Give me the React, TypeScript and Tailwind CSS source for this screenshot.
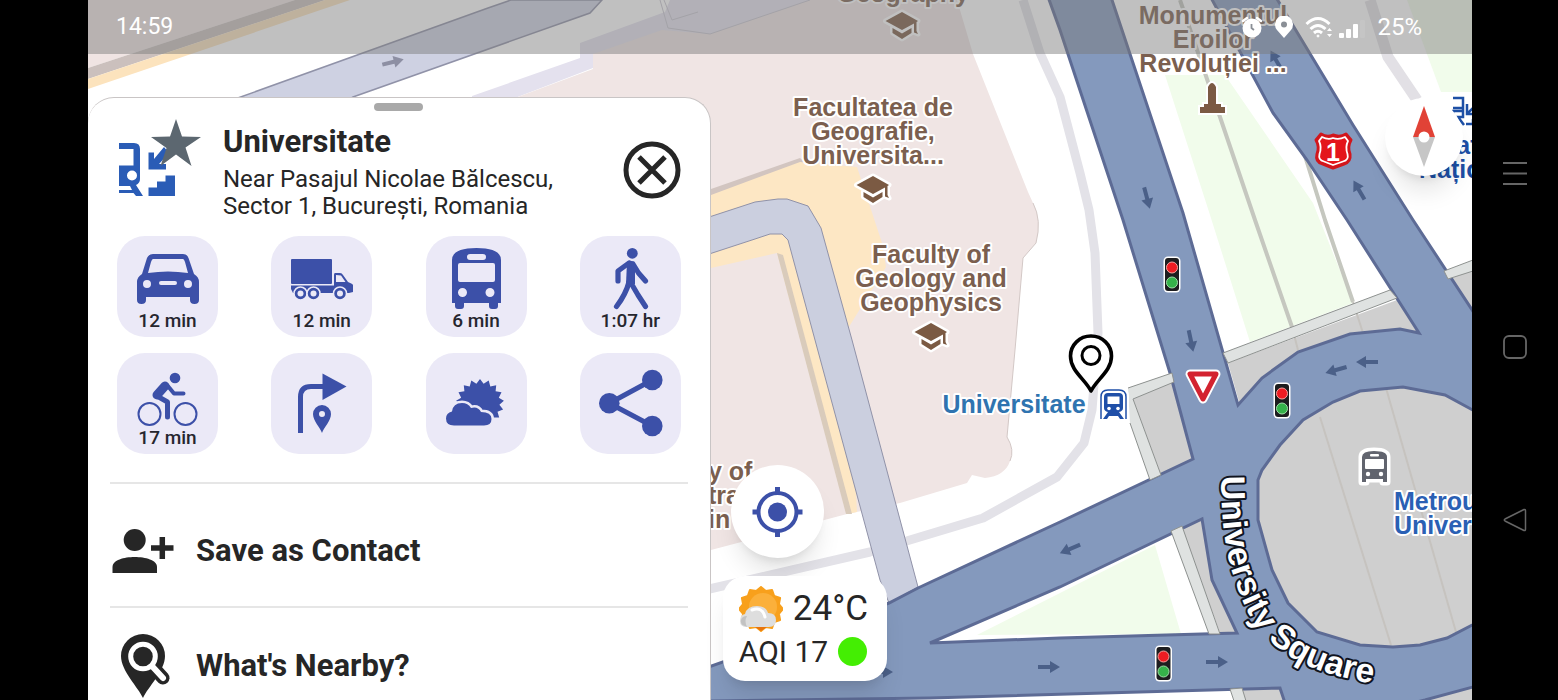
import type { ReactNode } from "react"

const INK = "#262626"

function sunPoints(cx: number, cy: number, outer: number, inner: number, rays: number) {
  return Array.from({ length: rays * 2 }, (_, i) => {
    const r = i % 2 ? inner : outer
    const a = (Math.PI * i) / rays - Math.PI / 2
    return `${(cx + r * Math.cos(a)).toFixed(1)},${(cy + r * Math.sin(a)).toFixed(1)}`
  }).join(" ")
}

/* ---------- map ---------- */

type LabelProps = { x: number; y: number; lines: string[]; className: string; anchor?: "start" | "middle" }

function Label({ x, y, lines, className, anchor = "middle" }: LabelProps) {
  return (
    <text textAnchor={anchor} strokeWidth={4} strokeLinejoin="round" className={`stroke-white text-[25px] font-bold [paint-order:stroke] ${className}`}>
      {lines.map((line, i) => (
        <tspan key={line} x={x} y={y + i * 24}>{line}</tspan>
      ))}
    </text>
  )
}

function Arrow({ x, y, angle, color = "#4b6088" }: { x: number; y: number; angle: number; color?: string }) {
  return (
    <path
      d="M-11 -2H1V-6L11 0L1 6V2H-11Z"
      fill={color}
      transform={`translate(${x} ${y}) rotate(${angle})`}
    />
  )
}

function TrafficLight({ x, y }: { x: number; y: number }) {
  return (
    <g transform={`translate(${x} ${y})`}>
      <rect x="-8.500" y="-18.500" width="17" height="36" rx="4.500" fill="#fff" />
      <rect x="-7" y="-17" width="14" height="33" rx="3" fill="#1d1d1f" />
      <circle cy="-7.500" r="5.500" fill="#ee1c22" stroke="#f3a3a0" />
      <circle cy="7.500" r="5.500" fill="#35b24a" stroke="#9fdca8" />
    </g>
  )
}

function Cap({ x, y }: { x: number; y: number }) {
  const d = "M-16.500 -5L0 -14L16 -5L14.500 -4V5L16 8L12 6.500V-2.500L0 4ZM-9.500 2V7L0 13L9.500 7V2L0 7.500Z"
  return (
    <g transform={`translate(${x} ${y})`}>
      <path d={d} fill="#fff" stroke="#fff" strokeWidth="5" strokeLinejoin="round" />
      <path d={d} fill="#7b5a43" />
    </g>
  )
}

const BLUE_ROADS =
  "M1047 -6L1060 30L1123 220L1170 373L1193 459L1060 522L918 588L889 603L700 670V706L711 701L930 698L1280 688L1286 706H1400L1425 700L1480 685V322L1413 220L1353 125L1274 -6H1209L1273 113L1307 160L1347 220L1419 333L1400 329L1350 334L1298 352L1262 378L1238 405L1183 213L1110 -6Z" +
  "M930 643L1060 587L1202 519L1212 580L1237 633L1060 638Z" +
  "M1480 414L1445 395L1403 387L1360 391L1333 402L1303 420L1280 445L1262 470L1258 480V520L1272 570L1288 603L1317 632L1360 645L1393 647L1420 645L1447 638L1480 621Z"

function CityMap() {
  return (
    <svg viewBox="88 0 1384 700" preserveAspectRatio="xMinYMin slice" className="absolute inset-0 h-full w-full font-['Liberation_Sans',sans-serif]" role="img" aria-label="Map">
      <defs>
        <path id="square" d="M1221 476C1221 512 1224 550 1234 577C1244 608 1254 630 1277 647C1302 667 1335 679 1396 687" />
      </defs>
      <rect x="88" width="1384" height="700" fill="#fff" />

      {/* buildings */}
      <path d="M88 0H295L88 68Z" fill="#f0e4e3" />
      <path d="M295 0H325L88 79V68Z" fill="#cbc0bd" />
      <path d="M325 0H350L88 89V79Z" fill="#fce3bd" />
      <path d="M472 96L580 58L580 43L665 12L670 0H820L800 30L593 68L515 98H472Z" fill="#e4e1ee" />
      <path d="M515 98L593 69V54L662 30L710 34L810 0H957L973 54L1028 192L1033 203Q1042 220 1036 243L1023 258L1015 350L1007 437Q1015 450 1010 461Q1005 476 985 478L972 475L967 483L900 503L847 514L711 550H500V98Z" fill="#f0e5e4" />
      <path d="M1033 203Q1042 220 1036 243L1023 258L1015 350L1007 437Q1015 450 1010 461" fill="none" stroke="#d3c8c6" />
      <path d="M660 0L668 28L710 34L810 0M664 0L672 20L698 12" fill="none" stroke="#c9c6d0" />
      <path d="M711 189L800 158L808 165L711 198Z" fill="#d2c5c0" />
      <path d="M711 195L800 162L857 167L882 243L886 267L847 330L857 512L847 514L777 253L711 268Z" fill="#fde7c4" />
      <path d="M777 253L783 255L852 514H846Z" fill="#d9cbbb" />

      {/* parks */}
      <path d="M1165 75H1225L1313 203L1353 303L1250 342L1210 215Z" fill="#f1fceb" />
      <path d="M1407 0H1472V92H1441Z" fill="#f1fceb" />
      <path d="M977 635L1155 545L1181 634Z" fill="#f1fceb" />

      {/* footpaths */}
      <g fill="none" strokeLinejoin="round">
        <path d="M705 590L870 552L983 518L1057 477L1084 443L1092 410L1098 333L1095 253L1089 210L1080 173L1060 97L1040 53L1023 0" stroke="#e3e2e8" strokeWidth="9" />
        <path d="M1370 0L1388 57L1417 100" stroke="#e2e0e5" strokeWidth="11" />
        <path d="M1180 0L1220 117L1255 220L1292 327M1300 140L1325 220L1353 302" stroke="#c5c7bf" strokeWidth="4" />
      </g>

      {/* service roads */}
      <path d="M235 99L488 8L511 0H602L590 13L353 97L345 102Z" fill="#ced1e2" stroke="#9092a8" strokeWidth="1.500" />
      <path d="M700 220L755 202L778 199H787L808 206L821 228L852 340L918 587L889 603L880 580L815 340L788 240L782 234H770L755 239L700 257Z" fill="#cbcfdf" stroke="#9092a8" />

      {/* plaza */}
      <g fill="#cfcfcf">
        <path d="M1228 363L1397 300L1419 333L1350 336L1298 354L1240 405Z" />
        <path d="M1133 399L1173 382L1193 459L1161 475Z" />
        <path d="M1448 279L1472 271V310Z" />
        <path d="M1182 528L1202 519L1212 580L1237 633H1220Z" />
        <path d="M1242 689L1280 688L1284 700H1245ZM1425 700L1472 687V700Z" />
        <path d="M1258 387H1472V647H1258Z" />
      </g>
      <path d="M1320 417L1391 645M1386 388L1456 632" fill="none" stroke="#c6c3bf" strokeWidth="2" />
      <path d="M1292 327L1298 350M1353 302L1363 333" stroke="#c6c3bf" strokeWidth="2" />

      <path d={BLUE_ROADS} fill="#8499bd" fillRule="evenodd" stroke="#5d6b95" strokeWidth="3" />

      {/* crossings */}
      <g fill="#dfe2e1" stroke="#8d918f">
        <path d="M1223 353L1390 290L1397 298L1228 363Z" />
        <path d="M1128 388L1172 373L1174 382L1133 399L1161 475L1150 480L1130 423" />
        <path d="M1444 271L1473 260V271L1448 279Z" />
        <path d="M1171 531L1182 526L1220 634H1209Z" />
        <path d="M1230 689L1242 688L1246 701H1234Z" />
      </g>

      <Arrow x={393} y={62} angle={-14} color="#8d8fa3" />
      <Arrow x={1147} y={198} angle={75} />
      <Arrow x={1191} y={341} angle={78} />
      <Arrow x={1276} y={60} angle={-120} />
      <Arrow x={1359} y={190} angle={-120} />
      <Arrow x={1367} y={362} angle={180} />
      <Arrow x={1336} y={370} angle={164} />
      <Arrow x={1070} y={549} angle={157} />
      <Arrow x={1049} y={667} angle={0} />
      <Arrow x={1217} y={662} angle={0} />
      <Arrow x={882} y={672} angle={0} />

      <Label x={903} y={2} lines={["Geography"]} className="fill-[#7b5f4f]" />
      <Label x={873} y={116} lines={["Facultatea de", "Geografie,", "Universita..."]} className="fill-[#7b5f4f]" />
      <Label x={931} y={263} lines={["Faculty of", "Geology and", "Geophysics"]} className="fill-[#7b5f4f]" />
      <Label x={1213} y={24} lines={["Monumentul", "Eroilor", "Revoluției ..."]} className="fill-[#7b5f4f]" />
      <Label x={708} y={480} lines={["y of", "tra", "in"]} className="fill-[#7b5f4f]" anchor="start" />
      <Label x={1014} y={413} lines={["Universitate"]} className="fill-[#2f74b0]" />
      <Label x={1394} y={510} lines={["Metrou", "Univer"]} className="fill-[#2a60b4]" anchor="start" />
      <Label x={1429} y={154} lines={["Teatrul"]} className="fill-[#1d4fa5]" anchor="start" />
      <Label x={1419} y={178} lines={["Național"]} className="fill-[#1d4fa5]" anchor="start" />

      <Cap x={902} y={26} />
      <Cap x={873} y={190} />
      <Cap x={931} y={337} />

      {/* monument */}
      <path d="M1200 113V107H1204V104H1208V87Q1212 79 1216 87V104H1221V107H1225V113Z" fill="#7b5a43" stroke="#fff" strokeWidth="4" paintOrder="stroke" />

      <TrafficLight x={1172} y={275} />
      <TrafficLight x={1282} y={401} />
      <TrafficLight x={1163.5} y={664} />

      {/* give way */}
      <path d="M1190 374H1216L1203 399Z" fill="#fff" stroke="#fff" strokeWidth="9" strokeLinejoin="round" />
      <path d="M1190 374H1216L1203 399Z" fill="#fff" stroke="#d32330" strokeWidth="5" strokeLinejoin="round" />

      {/* road number */}
      <path d="M1321 134Q1327 138 1333 135Q1340 138 1346 134L1351 140Q1347 147 1350 154Q1351 162 1344 164L1333 168L1323 164Q1315 162 1317 154Q1320 147 1316 140Z" fill="#e4151b" stroke="#d1161c" strokeWidth="3" strokeLinejoin="round" />
      <path d="M1322 137Q1328 140 1333 138Q1339 140 1345 137L1348 141Q1345 147 1347.500 154Q1349 160 1343 161.500L1333 165L1324 161.500Q1318 160 1319.500 154Q1322 147 1319 141Z" fill="#e4151b" stroke="#fff" strokeWidth="1.800" strokeLinejoin="round" />
      <text x="1333" y="161" textAnchor="middle" className="fill-white text-[25px] font-bold">1</text>

      {/* station */}
      <path d="M1100 420V397Q1100 389 1108 389H1119Q1127 389 1127 397V420Z" fill="#fff" stroke="#fff" strokeWidth="4" />
      <path d="M1101 419V397Q1101 390 1108 390H1119Q1126 390 1126 397V419" fill="none" stroke="#1f4fa8" strokeWidth="1.500" />
      <path d="M1108 393H1119Q1123 393 1123 397V408Q1123 411 1119 412L1124 419H1120L1118 416H1109L1107 419H1103L1108 412Q1104 411 1104 408V397Q1104 393 1108 393ZM1107.500 396.500V404H1119.500V396.500Z" fill="#1f4fa8" fillRule="evenodd" />
      <circle cx="1109" cy="408.500" r="1.800" fill="#fff" />
      <circle cx="1118" cy="408.500" r="1.800" fill="#fff" />

      {/* metro stop */}
      <path d="M1362 482V457Q1362 451 1374 451Q1387 451 1387 457V482H1383V479H1366V482Z" fill="#61646e" stroke="#fff" strokeWidth="7" strokeLinejoin="round" paintOrder="stroke" />
      <rect x="1365" y="459" width="19" height="10" rx="1" fill="#fff" />
      <rect x="1370" y="454" width="9" height="2.500" rx="1" fill="#fff" />
      <circle cx="1368" cy="474" r="2.200" fill="#fff" />
      <circle cx="1381" cy="474" r="2.200" fill="#fff" />

      {/* covered metro entrance */}
      <path d="M1453 98H1463V108H1453M1463 105V117H1453V111H1463M1458 117L1464 125M1467 104V114H1473M1467 114L1473 108M1466 124H1473V119" fill="none" stroke="#1d4fa5" strokeWidth="2.500" />

      {/* selected place */}
      <path d="M1091 391C1085 379 1070.500 371 1070.500 356A20.500 20 0 0 1 1111.500 356C1111.500 371 1097 379 1091 391Z" fill="#fff" stroke="#000" strokeWidth="3.600" strokeLinejoin="round" />
      <circle cx="1091" cy="355.500" r="9" fill="none" stroke="#000" strokeWidth="3" />

      <text strokeWidth={4} strokeLinejoin="round" className="fill-white stroke-[#10141f] text-[34px] font-bold [paint-order:stroke]">
        <textPath href="#square">University Square</textPath>
      </text>
    </svg>
  )
}

/* ---------- place actions ---------- */

const actions: { label: string; time?: string; art: ReactNode }[] = [
  {
    label: "Drive",
    time: "12 min",
    art: (
      <path
        fillRule="evenodd"
        d="M36 18H66Q70 18 71.500 22L77 38Q82 41 82 46V64Q82 68 77.500 68Q73 68 73 64V61H29V64Q29 68 24.500 68Q20 68 20 64V46Q20 41 25 38L30 22Q32 18 36 18ZM36 23Q35 23 34 26L31 37Q51 34 71 37L68 26Q67 23 66 23ZM30 44A4 4 0 1 0 30 52A4 4 0 1 0 30 44ZM71 44A4 4 0 1 0 71 52A4 4 0 1 0 71 44ZM44 45A2 2 0 0 0 44 49H58A2 2 0 0 0 58 45Z"
      />
    ),
  },
  {
    label: "Truck",
    time: "12 min",
    art: (
      <>
        <rect x="20" y="23" width="41" height="25" rx="1" />
        <path fillRule="evenodd" d="M20 48V53L22 57H78L82 56V49Q82 48 77 46L72 39Q71 37 69 37H64Q63 37 63 39V49.500H20ZM65 39V46H74.500L70 39.500Z" />
        <g stroke="#ebe9f7" strokeWidth="1.500">
          <circle cx="29.500" cy="57.500" r="6.500" />
          <circle cx="42.500" cy="57.500" r="6.500" />
          <circle cx="69" cy="57.500" r="6.500" />
        </g>
        <g fill="#ebe9f7">
          <circle cx="29.500" cy="57.500" r="3" />
          <circle cx="42.500" cy="57.500" r="3" />
          <circle cx="69" cy="57.500" r="3" />
        </g>
      </>
    ),
  },
  {
    label: "Transit",
    time: "6 min",
    art: (
      <path
        fillRule="evenodd"
        d="M26 67V24Q26 12 50.500 12Q75 12 75 24V67H72V70Q72 73 69 73H66Q63 73 63 70V67H38V70Q38 73 35 73H32Q29 73 29 70V67ZM44 18A3 3 0 0 0 44 24H57A3 3 0 0 0 57 18ZM34 27Q32 27 32 29V44Q32 46 34 46H67Q69 46 69 44V29Q69 27 67 27ZM36.500 52A4.500 4.500 0 1 0 36.500 61A4.500 4.500 0 1 0 36.500 52ZM64 52A4.500 4.500 0 1 0 64 61A4.500 4.500 0 1 0 64 52Z"
      />
    ),
  },
  {
    label: "Walk",
    time: "1:07 hr",
    art: (
      <>
        <circle cx="52.300" cy="17.300" r="5.400" />
        <path d="M47 26Q51 23 55 27V48H46Z" />
        <path d="M49 27L38 35V45M53 28L58.500 37L65.500 45M49 46Q46 58 36.500 70.500M51 47L58 59L65.500 70.500" fill="none" stroke="currentColor" strokeWidth="5.200" strokeLinecap="round" strokeLinejoin="round" />
      </>
    ),
  },
  {
    label: "Bike",
    time: "17 min",
    art: (
      <>
        <circle cx="58" cy="25" r="5.300" />
        <g fill="none" stroke="currentColor" strokeLinecap="round" strokeLinejoin="round">
          <circle cx="32.500" cy="61" r="11" strokeWidth="2" />
          <circle cx="68.500" cy="61" r="11" strokeWidth="2" />
          <path d="M48 33L40 42" strokeWidth="9" />
          <path d="M50 32L57 40.500H66.500" strokeWidth="4" />
          <path d="M40 43L50.500 49V64" strokeWidth="5" />
        </g>
      </>
    ),
  },
  {
    label: "Directions",
    art: (
      <>
        <path d="M29.500 80V44Q29.500 33.500 40 33.500H53" fill="none" stroke="currentColor" strokeWidth="5" />
        <path d="M51.500 20.500L75.500 33.500L51.500 47Z" />
        <path fillRule="evenodd" d="M51 80C49 74 42 68 42 61A9 9 0 0 1 60 61C60 68 53 74 51 80ZM51 58A3 3 0 1 0 51 64A3 3 0 1 0 51 58Z" />
      </>
    ),
  },
  {
    label: "Weather",
    art: (
      <>
        <polygon points={sunPoints(54, 50, 24, 19.5, 17)} />
        <path
          d="M28 72.500Q20 72.500 20 65.500Q20 60 26 58.500Q27 50 36 50Q42 50 45 55Q52 53 55 59Q65.500 59 65.500 66Q65.500 72.500 58 72.500ZM20 60L20 76H66L72 70"
          fill="#ebe9f7" stroke="#ebe9f7" strokeWidth="5" strokeLinejoin="round"
        />
        <path d="M28 72.500Q20 72.500 20 65.500Q20 60 26 58.500Q27 50 36 50Q42 50 45 55Q52 53 55 59Q65.500 59 65.500 66Q65.500 72.500 58 72.500Z" />
      </>
    ),
  },
  {
    label: "Share",
    art: (
      <>
        <path d="M72.300 27L29.300 50.300L72.300 73" fill="none" stroke="currentColor" strokeWidth="5" />
        <circle cx="29.300" cy="50.300" r="10.300" />
        <circle cx="72.300" cy="27" r="10.300" />
        <circle cx="72.300" cy="73" r="10.300" />
      </>
    ),
  },
]

function PlaceIcon() {
  return (
    <svg viewBox="0 0 84 80" className="h-20 w-[84px] shrink-0" aria-hidden>
      <g fill="#2a5cb6">
        <path fillRule="evenodd" d="M2 25H17Q23 25 23 31V61Q23 65 19 67L26 78H19L16.500 75H2V72H15L13 68H2V47.500H16.500V31H2ZM15 52.500A5 5 0 1 0 15 62.500A5 5 0 1 0 15 52.500Z" />
        <path d="M31.500 34.500H37V41L47 29L52 35L42 46H49V51.500H31.500Z" />
        <path d="M31.500 78V69.500H40V63.500H48.500V57.500H58V78Z" />
      </g>
      <path d="M59 1L65 18.500L84 19L68.500 29.500L74.500 48L59 36.500L43.500 48L49.500 30L34 19L53 18.500Z" fill="#5c6770" />
    </svg>
  )
}

function PlaceSheet() {
  return (
    <section className="mt-[43px] flex w-[45%] min-w-[520px] flex-col overflow-hidden rounded-t-[26px] border-t border-r border-[#c9c5c5] bg-white text-[#262626]">
      <div className="mx-auto mt-[5px] h-2 w-[49px] shrink-0 rounded-full bg-[#a9a9a9]" />
      <header className="flex pt-[7px] pr-[29px] pl-[29px]">
        <PlaceIcon />
        <div className="ml-[22px] flex-1 pt-[5px]">
          <h1 className="text-[31px] leading-[38px] font-bold">Universitate</h1>
          <p className="mt-[5px] text-[24px] leading-[27px]">
            Near Pasajul Nicolae Bălcescu,
            <br />
            Sector 1, București, Romania
          </p>
        </div>
        <button type="button" aria-label="Close" className="mt-[23px] h-[58px] w-[58px]">
          <svg viewBox="0 0 58 58" fill="none" stroke={INK} strokeWidth="5" aria-hidden>
            <circle cx="29" cy="29" r="26" />
            <path d="M16 16L42 42M42 16L16 42" />
          </svg>
        </button>
      </header>

      <div className="mt-4 grid grid-cols-[repeat(4,101px)] justify-between gap-y-4 pr-[29px] pl-[29px]">
        {actions.map((a) => (
          <button key={a.label} type="button" aria-label={a.label} className="grid h-[101px] rounded-[28px] bg-[#ebe9f7] text-[#3c50a8]">
            <svg viewBox="0 0 101 101" fill="currentColor" className="[grid-area:1/1]" aria-hidden>
              {a.art}
            </svg>
            {a.time && <span className="mb-1 self-end text-[19px] leading-6 font-medium text-[#26262e] [grid-area:1/1]">{a.time}</span>}
          </button>
        ))}
      </div>

      <div className="mx-[22px] mt-7 flex flex-col">
        <button type="button" className="flex h-[124px] items-center gap-[22px] border-t-2 border-[#e6e6e6] pt-3 text-left text-[31px] font-bold">
          <svg viewBox="112 526 62 46" className="ml-0.5 h-[46px] w-[62px]" fill={INK} aria-hidden>
            <circle cx="134.700" cy="538" r="11" />
            <path d="M112.500 571V565C112.500 558 124 555 134.700 555S157 558 157 565V571Z" />
            <path d="M162.300 535V557M151 546H173.500" stroke={INK} strokeWidth="5.500" />
          </svg>
          Save as Contact
        </button>
        <button type="button" className="flex h-[118px] items-center gap-[22px] border-t-2 border-[#e6e6e6] text-left text-[31px] font-bold">
          <svg viewBox="112 632 62 66" className="ml-0.5 h-[66px] w-[62px]" aria-hidden>
            <path d="M143 697C138 686 121 670 121 655A22 22 0 0 1 165 655C165 670 148 686 143 697Z" fill={INK} />
            <path d="M152 665L163 677" stroke={INK} strokeWidth="13" strokeLinecap="round" />
            <path d="M151 664L163 677" stroke="#fff" strokeWidth="6" strokeLinecap="round" />
            <circle cx="143" cy="655.500" r="12.300" fill={INK} stroke="#fff" strokeWidth="5" />
          </svg>
          What's Nearby?
        </button>
      </div>
    </section>
  )
}

/* ---------- map overlays ---------- */

function StatusBar() {
  return (
    <header className="relative flex h-[54px] shrink-0 items-center justify-between bg-[#797979]/47 pr-[50px] pl-7 text-[24px] text-white">
      <span className="text-[23px]">14:59</span>
      <div className="flex items-center gap-3">
        <svg viewBox="0 0 22 22" className="h-[22px] w-[22px]" aria-hidden>
          <circle cx="11" cy="12" r="9.500" fill="#fff" />
          <path d="M2 5L6 2M20 5L16 2" stroke="#fff" strokeWidth="2.500" strokeLinecap="round" />
          <path d="M10.500 8V12L13 14" fill="none" stroke="#8a8f96" strokeWidth="1.800" />
        </svg>
        <svg viewBox="0 0 18 22" className="h-[22px] w-[18px]" aria-hidden>
          <path d="M9 22L2 14A9 9 0 1 1 16 14Z" fill="#fff" />
          <circle cx="9" cy="8.500" r="3" fill="#8a8f96" />
        </svg>
        <div className="flex items-end gap-1">
          <svg viewBox="0 0 28 22" className="h-[22px] w-7" fill="none" stroke="#fff" strokeWidth="3" aria-hidden>
            <path d="M1.500 8Q13 -3 24.500 8M5.500 13Q13 6 20.500 13M9 17Q13 13.500 17 17" />
            <circle cx="13" cy="20" r="1" fill="#fff" strokeWidth="1" />
            <path d="M22 15L24.500 12L27 15ZM22 18L24.500 21L27 18Z" fill="#fff" stroke="none" />
          </svg>
          <svg viewBox="0 0 28 18" className="h-[18px] w-7" fill="#fff" aria-hidden>
            <rect x="2" y="13" width="5" height="5" rx="1" />
            <rect x="9" y="9" width="5" height="9" rx="1" />
            <rect x="16" y="4" width="5" height="14" rx="1" />
            <rect x="23" width="5" height="18" rx="1" opacity=".08" />
          </svg>
        </div>
        <span>25%</span>
      </div>
    </header>
  )
}

function MapControls() {
  return (
    <div className="mb-[19px] ml-3 flex flex-col gap-[18px] self-end">
      <button type="button" aria-label="My location" className="ml-2 h-[93px] w-[93px] rounded-full bg-white shadow-xl">
        <svg viewBox="0 0 93 93" fill="none" stroke="#3c50a8" strokeWidth="4" aria-hidden>
          <circle cx="46.500" cy="47" r="19" />
          <circle cx="46.500" cy="47" r="9.500" fill="#3c50a8" stroke="none" />
          <path d="M46.500 22V30M46.500 64V72M21.500 47H29M64 47H71.500" strokeWidth="5" />
        </svg>
      </button>
      <button type="button" className="flex h-[105px] w-[164px] flex-col justify-center rounded-[22px] bg-white pl-4 text-left text-[#262626] shadow-xl">
        <span className="flex items-center gap-2.5">
          <svg viewBox="0 0 44 46" className="h-[46px] w-11" aria-hidden>
            <polygon points={sunPoints(22, 23, 22, 18.5, 12)} fill="#f8a01c" stroke="#f8a01c" strokeWidth="2" strokeLinejoin="round" />
            <path d="M12 39H34L28 41L22 45L16 41Z" fill="#e8740c" />
            <circle cx="24" cy="21" r="14" fill="#fbb03b" />
            <path d="M8 41Q1 41 1 35Q1 29 6 28Q8 20 18 20Q27 20 29 27Q37 27 37 34Q37 41 30 41Z" fill="#dedede" />
            <path d="M6 40Q1 39 2 34Q3 30 8 30Q5 35 8 41Z" fill="#c2c2c2" />
            <path d="M13 24Q23 20 26 31" fill="none" stroke="#fff" strokeWidth="3" strokeLinecap="round" />
          </svg>
          <span className="text-[35px] leading-[46px]">24°C</span>
        </span>
        <span className="flex items-center gap-2.5 text-[30px] leading-[40px]">
          AQI 17
          <span className="h-[29px] w-[29px] rounded-full bg-[#44ee03]" />
        </span>
      </button>
    </div>
  )
}

function Compass() {
  return (
    <button type="button" aria-label="Compass" className="mt-11 mr-[9px] ml-auto h-[78px] w-[78px] rounded-full bg-white shadow-xl">
      <svg viewBox="0 0 78 78" aria-hidden>
        <path d="M39 8L50 39H28Z" fill="#e14236" />
        <path d="M39 69L50 39H28Z" fill="#c6c6c6" />
        <circle cx="39" cy="39" r="5.500" fill="#fff" />
      </svg>
    </button>
  )
}

function SystemNav() {
  return (
    <nav className="flex w-[86px] shrink-0 flex-col items-center justify-between pt-[161px] pb-[168px]">
      <button type="button" aria-label="Menu" className="h-6 w-6">
        <svg viewBox="0 0 24 24" stroke="#666" strokeWidth="2" aria-hidden>
          <path d="M0 2H24M0 12.500H24M0 23H24" />
        </svg>
      </button>
      <button type="button" aria-label="Home" className="h-6 w-6">
        <svg viewBox="0 0 24 24" fill="none" stroke="#666" strokeWidth="1.800" aria-hidden>
          <rect x="1" y="1" width="22" height="22" rx="5" />
        </svg>
      </button>
      <button type="button" aria-label="Back" className="h-6 w-6">
        <svg viewBox="0 0 24 24" fill="none" stroke="#666" strokeWidth="1.500" strokeLinejoin="round" aria-hidden>
          <path d="M21 1.500Q22.500 1 22.500 3V21Q22.500 23 21 22.500L2 13Q0.500 12 2 11Z" />
        </svg>
      </button>
    </nav>
  )
}

export default function App() {
  return (
    <div className="flex h-screen min-h-[600px] bg-black pl-[88px] font-[Roboto,sans-serif]">
      <main className="relative flex min-w-0 flex-1 flex-col overflow-hidden">
        <CityMap />
        <StatusBar />
        <div className="relative flex min-h-0 flex-1">
          <PlaceSheet />
          <MapControls />
          <Compass />
        </div>
      </main>
      <SystemNav />
    </div>
  )
}
